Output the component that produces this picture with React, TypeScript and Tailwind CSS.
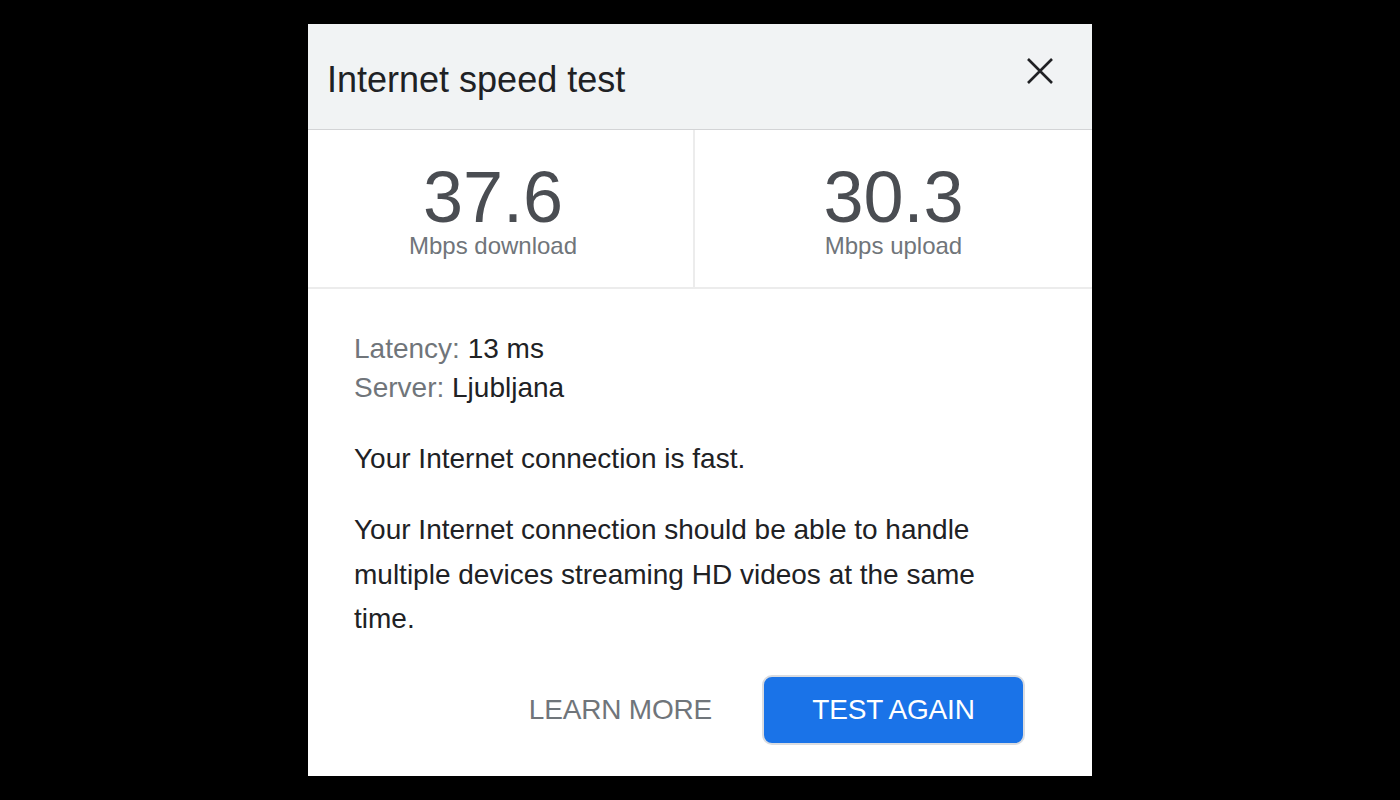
export default function App() {
  return (
    <div
      className="min-h-screen w-full bg-black flex justify-center pt-[24px]"
      style={{ fontFamily: '"Liberation Sans", Arial, sans-serif' }}
    >
      <div className="w-[784px] h-[752px] bg-white flex flex-col">
        {/* header */}
        <div className="h-[106px] bg-[#f1f3f4] border-b border-[#d3d4d6] flex justify-between pl-[19px] pr-[38px]">
          <h1 className="mt-[36px] text-[36px] leading-[40px] text-[#202124] font-normal">
            Internet speed test
          </h1>
          <button className="mt-[33px] self-start" aria-label="Close">
            <svg width="28" height="28" viewBox="0 0 28 28">
              <path
                d="M2 2 L26 26 M26 2 L2 26"
                stroke="#202124"
                strokeWidth="2.6"
                fill="none"
              />
            </svg>
          </button>
        </div>

        {/* results */}
        <div className="flex h-[159px] border-b-2 border-[#ececec]">
          <div className="w-[387px] border-r-2 border-[#ececec] flex flex-col items-center pt-[32px] pr-[15px]">
            <div className="text-[72px] leading-[70px] text-[#4a4d52]">37.6</div>
            <div className="text-[24px] leading-[27px] text-[#70757a]">Mbps download</div>
          </div>
          <div className="flex-1 flex flex-col items-center pt-[32px]">
            <div className="text-[72px] leading-[70px] text-[#4a4d52]">30.3</div>
            <div className="text-[24px] leading-[27px] text-[#70757a]">Mbps upload</div>
          </div>
        </div>

        {/* details */}
        <div className="flex flex-col pl-[46px] pr-[67px] pt-[40px] text-[28px] text-[#202124]">
          <div className="leading-[39px]">
            <div>
              <span className="text-[#70757a]">Latency:</span> 13 ms
            </div>
            <div>
              <span className="text-[#70757a]">Server:</span> Ljubljana
            </div>
          </div>
          <p className="mt-[30px] leading-[44px]">Your Internet connection is fast.</p>
          <p className="mt-[27px] leading-[44.5px]">
            Your Internet connection should be able to handle multiple devices streaming HD videos at the same time.
          </p>

          <div className="mt-[33px] flex justify-end items-center">
            <button className="mr-[50px] text-[28px] text-[#70757a] tracking-[-0.2px]">LEARN MORE</button>
            <button className="w-[263px] h-[70px] rounded-[10px] border-2 border-[#dadce0] bg-[#1a73e8] text-white text-[28px] tracking-[-0.2px]">
              TEST AGAIN
            </button>
          </div>
        </div>
      </div>
    </div>
  );
}
